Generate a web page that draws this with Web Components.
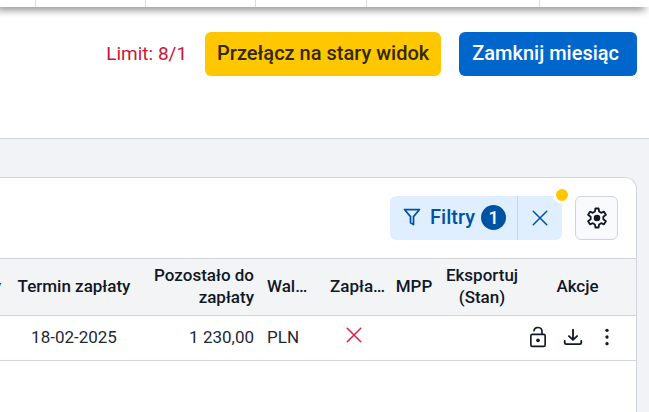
<!DOCTYPE html>
<html lang="pl">
<head>
<meta charset="utf-8">
<title>Dokumenty</title>
<style>
  body { margin: 0; font-family: Roboto, "Liberation Sans", sans-serif; color: #111827; background: #f2f3f7; }
</style>
</head>
<body>
<invoice-page></invoice-page>
<script>
const define = (name, html) => {
  const template = document.createElement('template');
  template.innerHTML = html;
  customElements.define(name, class extends HTMLElement {
    constructor() {
      super();
      this.attachShadow({ mode: 'open' }).append(template.content.cloneNode(true));
    }
  });
};

const icons = {
  filter: '<path d="M3 3H21L13.8 11.5V21L10.2 19V11.5Z" fill="none" stroke="currentColor" stroke-width="2.1" stroke-linejoin="round"/>',
  close: '<path d="M3 3L21 21M21 3L3 21" fill="none" stroke="currentColor" stroke-width="2" stroke-linecap="round"/>',
  gear: '<path d="M9.7 5L10.3 1.6H13.7L14.3 5L16.5 6.3L19.6 5.1L21.7 8.4L18.9 10.6V13.4L21.7 15.6L19.6 18.9L16.5 17.7L14.3 19L13.7 22.4H10.3L9.7 19L7.5 17.7L4.4 18.9L2.3 15.6L5.1 13.4V10.6L2.3 8.4L4.4 5.1L7.5 6.3Z" fill="#fff" stroke="currentColor" stroke-width="2" stroke-linejoin="round"/><circle cx="12" cy="12" r="3.6" fill="currentColor"/>',
  lock: '<rect x="4.2" y="9.2" width="15.6" height="13" rx="1.6" fill="none" stroke="currentColor" stroke-width="1.8"/><path d="M7.6 5.2C8.2 .4 16.4 .2 16.4 6.4V9" fill="none" stroke="currentColor" stroke-width="1.8" stroke-linecap="round"/><circle cx="12" cy="15.6" r="2" fill="currentColor"/>',
  download: '<path d="M12 4V14.5M7.6 11L12 15.2L16.4 11M3 16.4V18.2Q3 19.7 4.5 19.7H19.5Q21 19.7 21 18.2V16.4" fill="none" stroke="currentColor" stroke-width="2" stroke-linecap="round" stroke-linejoin="round"/>',
  more: '<g fill="currentColor"><circle cx="12" cy="4" r="2"/><circle cx="12" cy="12" r="2"/><circle cx="12" cy="20" r="2"/></g>'
};

customElements.define('ui-icon', class extends HTMLElement {
  constructor() {
    super();
    this.attachShadow({ mode: 'open' });
  }
  connectedCallback() {
    this.shadowRoot.innerHTML = `
      <style>
        :host { display: block; width: 20px; height: 20px; flex: none; }
        svg { display: block; width: 100%; height: 100%; }
      </style>
      <svg viewBox="0 0 24 24" aria-hidden="true">${icons[this.getAttribute('name')]}</svg>`;
  }
});

define('tab-strip', `
  <style>
    :host { display: grid; grid-template-columns: 36px 110px 110px 111px 173px 1fr; height: 7px; background: #fff;
      box-shadow: -4px 2px 9px rgba(0, 0, 0, .6); position: relative; clip-path: inset(0 0 -20px 0); }
    span { border-right: 1px solid #dcdcdc; }
    span:last-child { border: 0; }
  </style>
  <span></span><span></span><span></span><span></span><span></span><span></span>`);

define('action-button', `
  <style>
    :host { display: block; }
    button { display: block; height: 44px; padding: 0 12px 2px; border: 0; border-radius: 6px; white-space: nowrap;
      font: 500 20px/42px Roboto, "Liberation Sans", sans-serif; background: #ffc700; color: #332800; cursor: pointer; }
    :host([kind="primary"]) button { background: #0066cc; color: #fff; padding-right: 18px; padding-left: 13px; }
  </style>
  <button type="button"><slot></slot></button>`);

define('page-header', `
  <style>
    :host { display: flex; justify-content: flex-end; align-items: center; gap: 18px; padding: 25px 12px 62px;
      background: #fff; border-bottom: 1px solid #d1d5db; }
  </style>
  <slot></slot>`);

define('filter-control', `
  <style>
    :host { display: flex; position: relative; color: #0052a3; background: #e0efff; border-radius: 6px; }
    button { display: flex; align-items: center; justify-content: center; height: 44px; border: 0; background: none;
      color: inherit; font: 500 20px/42px Roboto, "Liberation Sans", sans-serif; cursor: pointer; }
    .open { padding: 0 11px 2px 12px; }
    .open ui-icon { margin-right: 8px; }
    .count { width: 25px; height: 25px; margin-left: 6px; border-radius: 50%; background: #0052a3; color: #fff;
      font-size: 18px; line-height: 25px; }
    .clear { width: 45px; padding: 0 0 1px; border-left: 1px solid #b8dcff; }
    .clear ui-icon { width: 18px; height: 18px; }
    .dot { position: absolute; top: -10px; right: -9px; width: 12px; height: 12px; border: 3px solid #fff;
      border-radius: 50%; background: #ffc700; }
  </style>
  <button class="open" type="button"><ui-icon name="filter"></ui-icon>Filtry<span class="count">1</span></button>
  <button class="clear" type="button" aria-label="Wyczyść filtry"><ui-icon name="close"></ui-icon></button>
  <span class="dot"></span>`);

define('settings-button', `
  <style>
    :host { display: block; }
    button { display: flex; align-items: center; justify-content: center; width: 43px; height: 44px; padding: 0 0 1px;
      border: 1px solid #d1d5db; border-radius: 6px; background: #f9fafb; color: #111827; cursor: pointer; }
    ui-icon { width: 22px; height: 22px; }
  </style>
  <button type="button" aria-label="Ustawienia"><ui-icon name="gear"></ui-icon></button>`);

define('row-actions', `
  <style>
    :host { display: flex; justify-content: flex-start; gap: 13px; }
    button { display: block; padding: 0; border: 0; background: none; color: #111827; cursor: pointer; }
    ui-icon { width: 22px; height: 22px; }
    .more ui-icon { width: 20px; height: 22px; }
  </style>
  <button type="button" aria-label="Odblokuj"><ui-icon name="lock"></ui-icon></button>
  <button type="button" aria-label="Pobierz"><ui-icon name="download"></ui-icon></button>
  <button class="more" type="button" aria-label="Więcej"><ui-icon name="more"></ui-icon></button>`);

define('invoice-table', `
  <style>
    :host { display: block; }
    table { width: 100%; table-layout: fixed; border-collapse: separate; border-spacing: 0; font-size: 17px; line-height: 22px; }
    th, td { box-sizing: border-box; padding: 5px 6px 7px; text-align: center; border-bottom: 1px solid #d1d5db; white-space: nowrap; }
    th { background: #f3f4f6; border-top: 1px solid #d1d5db; font-weight: 500; height: 58px; }
    td { height: 45px; color: #1f2937; }
    .date { width: 134px; }
    .amount { width: 120px; text-align: right; padding-right: 7px; }
    th.amount, th.export { white-space: normal; }
    .currency { width: 58px; text-align: left; }
    .paid { width: 70px; }
    th.paid { padding-left: 11px; text-align: left; }
    .mpp { width: 50px; }
    .export { width: 86px; }
    .actions { width: 111px; }
    th.actions { padding-right: 12px; }
    td.actions { padding-left: 2px; }
    .first { text-align: right; padding-left: 0; }
    td ui-icon { width: 18px; height: 18px; margin: -5px auto 0; color: #dc2048; }
  </style>
  <table>
    <thead><tr>
      <th class="first">y</th><th class="date">Termin zapłaty</th><th class="amount">Pozostało do zapłaty</th>
      <th class="currency">Wal…</th><th class="paid">Zapła…</th><th class="mpp">MPP</th>
      <th class="export">Eksportuj (Stan)</th><th class="actions">Akcje</th>
    </tr></thead>
    <tbody><tr>
      <td class="first"></td><td>18-02-2025</td><td class="amount">1 230,00</td><td class="currency">PLN</td>
      <td class="paid"><ui-icon name="close"></ui-icon></td><td></td><td></td>
      <td class="actions"><row-actions></row-actions></td>
    </tr></tbody>
  </table>`);

define('table-panel', `
  <style>
    :host { display: block; margin: 38px 12px 0 -12px; min-height: calc(100vh - 178px); background: #fff;
      border: 1px solid #d1d5db; border-bottom: 0; border-radius: 12px 12px 0 0; }
    .toolbar { display: flex; justify-content: flex-end; gap: 13px; padding: 18px; }
  </style>
  <div class="toolbar"><slot name="tools"></slot></div>
  <slot></slot>`);

define('invoice-page', `
  <style>
    :host { display: block; min-height: 100vh; overflow: hidden; background: #f2f3f7; }
    .limit { font-size: 19px; line-height: 44px; color: #cc1638; }
  </style>
  <tab-strip></tab-strip>
  <page-header>
    <span class="limit">Limit: 8/1</span>
    <action-button>Przełącz na stary widok</action-button>
    <action-button kind="primary">Zamknij miesiąc</action-button>
  </page-header>
  <table-panel>
    <filter-control slot="tools"></filter-control>
    <settings-button slot="tools"></settings-button>
    <invoice-table></invoice-table>
  </table-panel>`);
</script>
</body>
</html>
